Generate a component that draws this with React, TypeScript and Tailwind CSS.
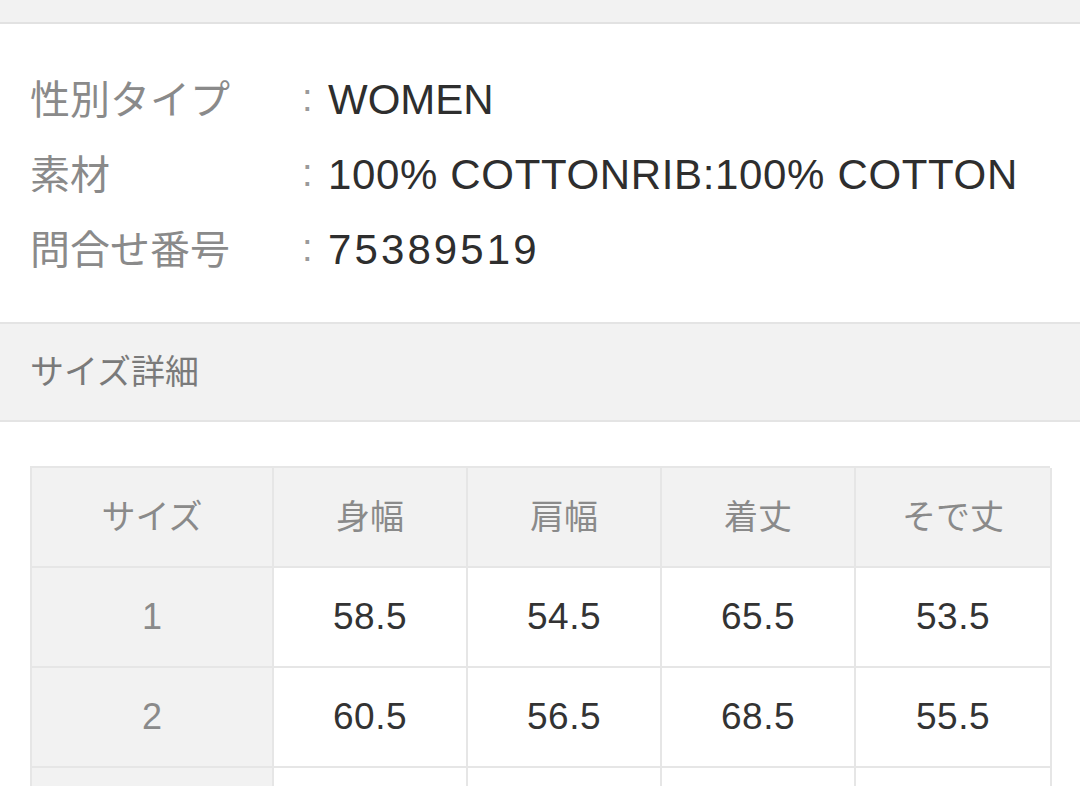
import React from "react";

const font = { fontFamily: '"Liberation Sans", "Noto Sans CJK JP", sans-serif' };

const info = [
  { label: "性別タイプ", value: "WOMEN", track: "tracking-normal" },
  { label: "素材", value: "100% COTTONRIB:100% COTTON", track: "tracking-[0.65px]" },
  { label: "問合せ番号", value: "75389519", track: "tracking-[3.1px]" },
];

const heads = ["サイズ", "身幅", "肩幅", "着丈", "そで丈"];
const rows = [
  ["1", "58.5", "54.5", "65.5", "53.5"],
  ["2", "60.5", "56.5", "68.5", "55.5"],
  ["", "", "", "", ""],
];

const App = () => {
  return (
    <div className="w-[1080px] h-[786px] overflow-hidden bg-white" style={font}>
      {/* top bar */}
      <div className="h-[24px] bg-[#f2f2f2] border-b-2 border-[#e2e2e2]" />

      {/* product info */}
      <div className="pt-[38px] pb-[35px] pl-[30px]">
        {info.map((r) => (
          <div key={r.label} className="flex items-center h-[75px]">
            <div className="w-[272px] text-[40px] text-[#8a8a8a] leading-none">{r.label}</div>
            <div className="w-[26px] text-[38px] text-[#9a9a9a] leading-none pb-[4px]">:</div>
            <div className={"text-[42px] text-[#2e2e2e] leading-none " + r.track}>{r.value}</div>
          </div>
        ))}
      </div>

      {/* section header */}
      <div className="h-[100px] bg-[#f2f2f2] border-y-2 border-[#e4e4e4] flex items-center pl-[30px]">
        <span className="text-[34px] text-[#7a7a7a]">サイズ詳細</span>
      </div>

      {/* size table */}
      <div className="pt-[44px] pl-[30px]">
        <div className="grid grid-cols-[242px_194px_194px_194px_196px] w-[1020px] border-l-2 border-t-2 border-[#e6e6e6]">
          {heads.map((h) => (
            <div
              key={h}
              className="h-[100px] flex items-center justify-center bg-[#f2f2f2] border-r-2 border-b-2 border-[#e6e6e6] text-[34px] text-[#8a8a8a]"
            >
              {h}
            </div>
          ))}
          {rows.map((r, ri) =>
            r.map((c, i) => (
              <div
                key={ri + "-" + i}
                className={
                  i === 0
                    ? "h-[100px] flex items-center justify-center bg-[#f2f2f2] border-r-2 border-b-2 border-[#e6e6e6] text-[36px] text-[#8a8a8a]"
                    : "h-[100px] flex items-center justify-center bg-white border-r-2 border-b-2 border-[#e6e6e6] text-[37px] text-[#333] tracking-[0.5px]"
                }
              >
                {c}
              </div>
            ))
          )}
        </div>
      </div>
    </div>
  );
};

export default App;
